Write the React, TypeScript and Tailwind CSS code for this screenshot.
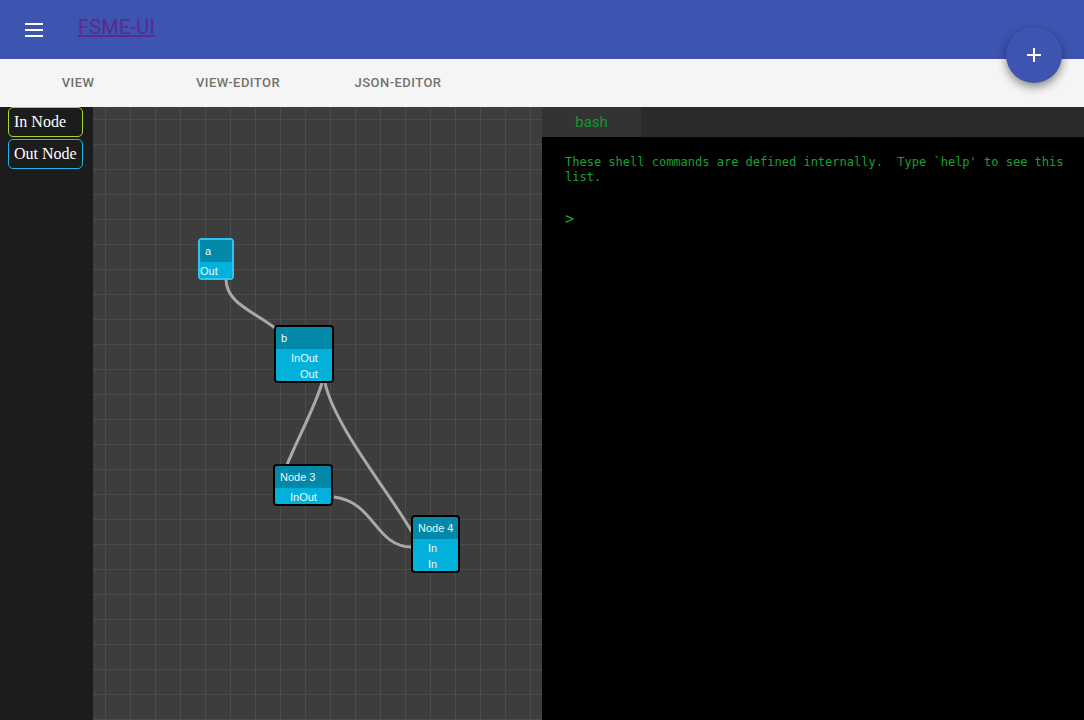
import React from 'react';

type Port = { label: string; pl: number };

interface NodeProps {
  title: string;
  x: number;
  y: number;
  w: number;
  ports: Port[];
  selected?: boolean;
}

const GraphNode: React.FC<NodeProps> = ({ title, x, y, w, ports, selected }) => (
  <div
    className={`absolute overflow-hidden rounded-[4px] border-2 ${selected ? 'border-[#2cc6f4]' : 'border-black'}`}
    style={{ left: x, top: y, width: w }}
  >
    <div className="h-[22px] bg-[#0288a8] pl-[5px] text-[11px] leading-[22px] text-[#eef8fb] whitespace-nowrap">
      {title}
    </div>
    {ports.map((p, i) => (
      <div
        key={i}
        className="h-[16px] bg-[#02b1da] text-[11px] leading-[18px] text-[#eef8fb] whitespace-nowrap"
        style={{ paddingLeft: p.pl }}
      >
        {p.label}
      </div>
    ))}
  </div>
);

export default function App() {
  return (
    <div className="relative flex h-[720px] w-[1084px] flex-col overflow-hidden font-['Roboto',sans-serif]">
      {/* app bar */}
      <header className="flex h-[59px] shrink-0 items-center bg-[#3d54b0]">
        <button className="ml-[25px] flex w-[18px] flex-col gap-[4px]">
          <span className="h-[2px] w-full bg-white" />
          <span className="h-[2px] w-full bg-white" />
          <span className="h-[2px] w-full bg-white" />
        </button>
        <a href="#" className="ml-[35px] -mt-[6px] text-[20px] tracking-[0.2px] text-[#5b2a8c] underline">
          FSME-UI
        </a>
      </header>

      {/* tabs */}
      <nav className="flex h-[48px] shrink-0 bg-[#f5f5f5] pl-0">
        <div className="-ml-[2px] flex">
          {['VIEW', 'VIEW-EDITOR', 'JSON-EDITOR'].map(t => (
            <div
              key={t}
              className="flex h-[48px] w-[160px] items-center justify-center text-[13px] font-medium tracking-[0.45px] text-[#727272]"
            >
              {t}
            </div>
          ))}
        </div>
      </nav>

      <main className="flex min-h-0 flex-1">
        {/* palette */}
        <aside className="flex w-[93px] shrink-0 flex-col gap-[2px] bg-[#1c1c1c] pl-[8px] font-['Liberation_Serif',serif] text-[16px] text-white">
          <div className="flex h-[30px] w-[75px] items-center rounded-[5px] border border-[#a9d630] pl-[5px]">In Node</div>
          <div className="flex h-[30px] w-[75px] items-center rounded-[5px] border border-[#1cb8e6] pl-[5px]">Out Node</div>
        </aside>

        {/* canvas */}
        <section className="relative w-[449px] shrink-0 bg-[#3d3d3d] bg-[linear-gradient(to_right,#4b4b4b_1px,transparent_1px),linear-gradient(to_bottom,#4b4b4b_1px,transparent_1px)] bg-size-[25px_25px] bg-position-[12px_12px] font-['Liberation_Sans',sans-serif]">
          <svg className="absolute inset-0 h-full w-full" fill="none" stroke="#a9a9a9" strokeWidth="3">
            <path d="M133 172 C133 196, 160 204, 182 221" />
            <path d="M229 276 C222 300, 203 335, 194 358" />
            <path d="M232 276 C242 320, 296 385, 319 425" />
            <path d="M241 390 C282 395, 282 440, 319 440" />
          </svg>
          <GraphNode title="a" x={105} y={131} w={36} selected ports={[{ label: 'Out', pl: 0 }]} />
          <GraphNode
            title="b"
            x={181}
            y={218}
            w={60}
            ports={[
              { label: 'InOut', pl: 15 },
              { label: 'Out', pl: 24 },
            ]}
          />
          <GraphNode title="Node 3" x={180} y={357} w={60} ports={[{ label: 'InOut', pl: 15 }]} />
          <GraphNode
            title="Node 4"
            x={318}
            y={408}
            w={49}
            ports={[
              { label: 'In', pl: 15 },
              { label: 'In', pl: 15 },
            ]}
          />
        </section>

        {/* terminal */}
        <section className="flex min-w-0 flex-1 flex-col bg-black">
          <div className="flex h-[30px] shrink-0 bg-[#2a2a2a]">
            <div className="flex w-[99px] items-center justify-center bg-[#333333] text-[15px] text-[#14972e]">bash</div>
          </div>
          <div className="pl-[23px] pr-[16px] pt-[18px] font-['DejaVu_Sans_Mono',monospace] text-[12px] leading-[15px] text-[#17a032]">
            <p>These shell commands are defined internally.&nbsp; Type `help' to see this list.</p>
            <p className="mt-[24px] text-[15px] leading-[20px]">&gt;</p>
          </div>
        </section>
      </main>

      {/* floating action button */}
      <button className="absolute right-[22px] top-[27px] flex h-[56px] w-[56px] items-center justify-center rounded-full bg-[#3d54b0] shadow-[0_4px_10px_rgba(0,0,0,0.45)]">
        <svg width="18" height="18" viewBox="0 0 18 18" stroke="white" strokeWidth="2">
          <path d="M9 2v14M2 9h14" />
        </svg>
      </button>
    </div>
  );
}
